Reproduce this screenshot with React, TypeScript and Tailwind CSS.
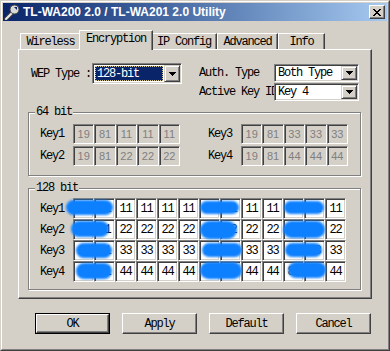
import React from 'react';

// ── Win2000 classic bevels ────────────────────────────────────────────────────
const sunken =
    'border border-t-[#808080] border-l-[#808080] border-r-white border-b-white shadow-[inset_1px_1px_0_#404040,inset_-1px_-1px_0_#d4d0c8]';
const raised =
    'border border-t-white border-l-white border-r-[#404040] border-b-[#404040] shadow-[inset_-1px_-1px_0_#808080]';
const etched =
    'border border-[#808080] shadow-[inset_1px_1px_0_#ffffff,1px_1px_0_#ffffff]';

const KEYS64 = [
    { a: 'Key1', av: ['19', '81', '11', '11', '11'], b: 'Key3', bv: ['19', '81', '33', '33', '33'] },
    { a: 'Key2', av: ['19', '81', '22', '22', '22'], b: 'Key4', bv: ['19', '81', '44', '44', '44'] },
];

const KEYS128 = ['11', '22', '33', '44'].map((d, i) => ({
    label: `Key${i + 1}`,
    values: ['19', '81', d, d, d, d, '19', d, d, d, '81', d, d],
}));

// scribbles over the key bytes, in group-box coordinates
const BLOBS = [
    [37, 11, 47, 15], [171, 12, 39, 13], [255, 12, 40, 13],
    [42, 32, 38, 16], [171, 32, 37, 18], [254, 32, 42, 17],
    [47, 54, 36, 15], [173, 54, 40, 14], [256, 54, 37, 14],
    [47, 74, 36, 16], [171, 73, 42, 17], [259, 73, 38, 16],
];

const DropArrow = () => (
    <div className="w-[16px] h-full shrink-0 bg-[#d4d0c8] border border-t-[#d4d0c8] border-l-[#d4d0c8] border-r-[#404040] border-b-[#404040] shadow-[inset_1px_1px_0_#ffffff,inset_-1px_-1px_0_#808080] flex items-center justify-center">
        <svg width="7" height="4" viewBox="0 0 7 4" shapeRendering="crispEdges">
            <rect x="0" y="0" width="7" height="1" fill="#000" />
            <rect x="1" y="1" width="5" height="1" fill="#000" />
            <rect x="2" y="2" width="3" height="1" fill="#000" />
            <rect x="3" y="3" width="1" height="1" fill="#000" />
        </svg>
    </div>
);

const CloseGlyph = () => {
    const px: [number, number][] = [];
    const rows = ['XX....XX', '.XX..XX.', '..XXXX..', '...XX...', '..XXXX..', '.XX..XX.', 'XX....XX'];
    rows.forEach((r, y) => r.split('').forEach((c, x) => { if (c === 'X') px.push([x, y]); }));
    return (
        <svg width="8" height="7" viewBox="0 0 8 7" shapeRendering="crispEdges">
            {px.map(([x, y]) => <rect key={`${x}-${y}`} x={x} y={y} width="1" height="1" fill="#000" />)}
        </svg>
    );
};

const KeyIcon = () => (
    <svg width="16" height="16" viewBox="0 0 16 16">
        <path d="M2 15 L8 9" stroke="#404040" strokeWidth="4" strokeLinecap="round" />
        <path d="M2 15 L8 9" stroke="#e8e8e8" strokeWidth="2" strokeLinecap="round" />
        <circle cx="10.5" cy="5.5" r="4.5" fill="#d8d8d8" stroke="#404040" strokeWidth="1" />
        <path d="M10 3 L13 3 L13 6 Z" fill="#0a246a" />
    </svg>
);

const Tab = ({ label, w, active }: { label: string; w: string; active?: boolean }) =>
    active ? (
        <div className={`${w} h-[20px] -mx-[2px] relative z-10 bg-[#d4d0c8] border-t border-l border-r border-t-white border-l-white border-r-[#404040] shadow-[inset_-1px_0_0_#808080] flex items-center justify-center pb-[3px]`}>
            {label}
        </div>
    ) : (
        <div className={`${w} h-[16px] mb-px bg-[#d4d0c8] border-t border-l border-r border-t-white border-l-white border-r-[#404040] shadow-[inset_-1px_0_0_#808080] flex items-center justify-center`}>
            {label}
        </div>
    );

const GroupBox = ({ title, className, children }: { title: string; className: string; children: React.ReactNode }) => (
    <div className={`relative ml-[9px] w-[333px] ${etched} ${className}`}>
        <span className="absolute -top-[7px] left-[6px] px-[1px] bg-[#d4d0c8] leading-[12px]">{title}</span>
        {children}
    </div>
);

const Btn = ({ label, def }: { label: string; def?: boolean }) =>
    def ? (
        <div className="w-[75px] h-[21px] border border-black">
            <div className={`w-full h-full ${raised} flex items-center justify-center`}>{label}</div>
        </div>
    ) : (
        <div className={`w-[75px] h-[21px] ${raised} flex items-center justify-center`}>{label}</div>
    );

export default function App() {
    return (
        <div className="w-[390px] h-[351px] bg-[#d4d0c8] border border-t-[#d4d0c8] border-l-[#d4d0c8] border-r-[#404040] border-b-[#404040] text-[12px] leading-none tracking-[-1.2px] text-black font-['Liberation_Mono',monospace] overflow-hidden">
            <div className="w-full h-full border border-t-white border-l-white border-r-[#808080] border-b-[#808080] p-px flex flex-col">
                {/* Title bar */}
                <div className="h-[18px] shrink-0 flex items-center bg-linear-to-r from-[#0a246a] to-[#a6caf0]">
                    <div className="ml-px"><KeyIcon /></div>
                    <span className="ml-[3px] font-['Liberation_Sans',Arial,sans-serif] font-bold text-[12px] tracking-normal text-white">
                        TL-WA200 2.0 / TL-WA201 2.0 Utility
                    </span>
                    <div className={`ml-auto mr-[2px] w-[16px] h-[14px] bg-[#d4d0c8] ${raised} flex items-center justify-center`}>
                        <CloseGlyph />
                    </div>
                </div>

                {/* Tabs */}
                <div className="mt-[9px] ml-[17px] -mb-px flex items-end relative z-10">
                    <Tab label="Wireless" w="w-[61px]" />
                    <Tab label="Encryption" w="w-[74px]" active />
                    <Tab label="IP Config" w="w-[66px]" />
                    <Tab label="Advanced" w="w-[61px]" />
                    <Tab label="Info" w="w-[47px]" />
                </div>

                {/* Tab page */}
                <div className="ml-[15px] w-[354px] h-[250px] shrink-0 border border-t-white border-l-white border-r-[#404040] border-b-[#404040] shadow-[inset_-1px_-1px_0_#808080]">
                    <div className="pt-[13px] pl-[12px] flex">
                        <div className="flex items-center h-[21px]">
                            <span className="w-[61px]">WEP Type :</span>
                            <div className={`w-[90px] h-[21px] bg-white p-px flex ${sunken}`}>
                                <div className="flex-1 p-px">
                                    <div className="h-full bg-[#0a246a] text-white border border-dotted border-[#d8c890] flex items-center pl-[1px]">
                                        128-bit
                                    </div>
                                </div>
                                <DropArrow />
                            </div>
                        </div>
                        <div className="ml-[17px] mt-px flex flex-col gap-px">
                            <div className="flex items-center h-[18px]">
                                <span className="w-[75px] whitespace-nowrap overflow-hidden">Auth. Type</span>
                                <div className={`w-[85px] h-[18px] bg-white p-px flex ${sunken}`}>
                                    <span className="flex-1 flex items-center pl-[2px]">Both Type</span>
                                    <DropArrow />
                                </div>
                            </div>
                            <div className="flex items-center h-[18px]">
                                <span className="w-[75px] whitespace-nowrap overflow-hidden">Active Key ID</span>
                                <div className={`w-[85px] h-[18px] bg-white p-px flex ${sunken}`}>
                                    <span className="flex-1 flex items-center pl-[2px]">Key 4</span>
                                    <DropArrow />
                                </div>
                            </div>
                        </div>
                    </div>

                    {/* 64 bit */}
                    <GroupBox title="64 bit" className="mt-[11px] pt-[11px] pb-[9px] pl-[11px]">
                        <div className="flex flex-col gap-[2px]">
                            {KEYS64.map((row) => (
                                <div key={row.a} className="flex items-center h-[20px]">
                                    <span className="w-[33px]">{row.a}</span>
                                    <div className="grid grid-cols-5 w-[107px] h-full">
                                        {row.av.map((v, i) => (
                                            <div key={i} className={`${sunken} flex items-center justify-center text-[#808080] text-[11px] font-['Liberation_Sans',Arial,sans-serif] tracking-normal`}>{v}</div>
                                        ))}
                                    </div>
                                    <span className="ml-[28px] w-[33px]">{row.b}</span>
                                    <div className="grid grid-cols-5 w-[107px] h-full">
                                        {row.bv.map((v, i) => (
                                            <div key={i} className={`${sunken} flex items-center justify-center text-[#808080] text-[11px] font-['Liberation_Sans',Arial,sans-serif] tracking-normal`}>{v}</div>
                                        ))}
                                    </div>
                                </div>
                            ))}
                        </div>
                    </GroupBox>

                    {/* 128 bit */}
                    <GroupBox title="128 bit" className="mt-[12px] pt-[9px] pb-[7px] pl-[11px]">
                        {KEYS128.map((row) => (
                            <div key={row.label} className="flex items-center h-[21px]">
                                <span className="w-[33px]">{row.label}</span>
                                <div className="flex h-full">
                                    {row.values.map((v, i) => (
                                        <div key={i} className={`w-[21px] h-full bg-white ${sunken} flex items-center justify-center`}>{v}</div>
                                    ))}
                                </div>
                            </div>
                        ))}
                        {BLOBS.map(([x, y, w, h], i) => (
                            <div
                                key={i}
                                className="absolute rounded-full bg-[#0d80ff] blur-[1px]"
                                style={{ left: x, top: y, width: w, height: h }}
                            />
                        ))}
                    </GroupBox>
                </div>

                {/* Buttons */}
                <div className="mt-[14px] ml-[32px] flex gap-[12px]">
                    <Btn label="OK" def />
                    <Btn label="Apply" />
                    <Btn label="Default" />
                    <Btn label="Cancel" />
                </div>
            </div>
        </div>
    );
}
